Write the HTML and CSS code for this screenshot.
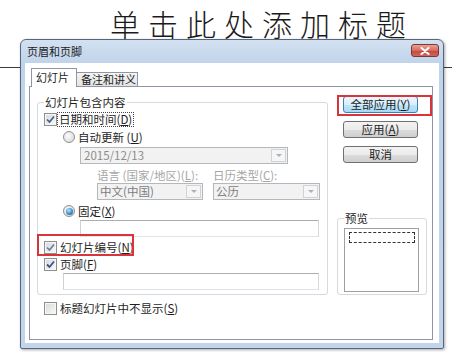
FILE: index.html
```html
<!DOCTYPE html>
<html lang="zh-CN">
<head>
<meta charset="utf-8">
<title>页眉和页脚</title>
<link rel="stylesheet" href="styles.css">
</head>
<body>
<div class="slide-rule"></div>
<h1 class="slide-title">单击此处添加标题</h1>

<div class="dialog">
  <div class="titlebar">
    <span class="title">页眉和页脚</span>
    <span class="close"><svg width="10" height="8" viewBox="0 0 10 8"><path d="M1.5 1 L8.5 7 M8.5 1 L1.5 7" stroke="#fff" stroke-width="2" stroke-linecap="round"/></svg></span>
  </div>
  <div class="client">
    <div class="tabs">
      <div class="tab active">幻灯片</div>
      <div class="tab">备注和讲义</div>
    </div>
    <div class="page">
      <div class="left-col">
        <fieldset class="group">
          <legend>幻灯片包含内容</legend>
          <div class="row first">
            <span class="cb"><svg width="9" height="9" viewBox="0 0 9 9"><path d="M1 4.5 L3.5 7 L8 1.5" fill="none" stroke="#41608f" stroke-width="1.7"/></svg></span>
            <span class="lbl focus">日期和时间(<span class="u">D</span>)</span>
          </div>
          <div class="row indent1 gap4">
            <span class="rb"></span>
            <span class="lbl">自动更新 (<span class="u">U</span>)</span>
          </div>
          <div class="combo date">
            <span class="val">2015/12/13</span><span class="drop"></span>
          </div>
          <div class="pair labels">
            <span>语言 (国家/地区)(<span class="u">L</span>):</span>
            <span>日历类型(<span class="u">C</span>):</span>
          </div>
          <div class="pair combos">
            <div class="combo"><span class="val">中文(中国)</span><span class="drop"></span></div>
            <div class="combo"><span class="val">公历</span><span class="drop"></span></div>
          </div>
          <div class="row indent1 gap4">
            <span class="rb on"><span class="dot"></span></span>
            <span class="lbl">固定(<span class="u">X</span>)</span>
          </div>
          <div class="field fixed"></div>
          <div class="row gap3">
            <span class="cb"><svg width="9" height="9" viewBox="0 0 9 9"><path d="M1 4.5 L3.5 7 L8 1.5" fill="none" stroke="#6a7f9f" stroke-width="1.7"/></svg></span>
            <span class="lbl">幻灯片编号(<span class="u">N</span>)</span>
          </div>
          <div class="row gap3">
            <span class="cb"><svg width="9" height="9" viewBox="0 0 9 9"><path d="M1 4.5 L3.5 7 L8 1.5" fill="none" stroke="#2f5592" stroke-width="1.8"/></svg></span>
            <span class="lbl">页脚(<span class="u">F</span>)</span>
          </div>
          <div class="field footer"></div>
        </fieldset>
        <div class="row hide-title">
          <span class="cb"></span>
          <span class="lbl">标题幻灯片中不显示(<span class="u">S</span>)</span>
        </div>
      </div>
      <div class="right-col">
        <div class="btns">
          <div class="btn default">全部应用(<span class="u">Y</span>)</div>
          <div class="btn">应用(<span class="u">A</span>)</div>
          <div class="btn">取消</div>
        </div>
        <fieldset class="group preview">
          <legend>预览</legend>
          <div class="preview-box"><div class="dash"></div></div>
        </fieldset>
      </div>
      <div class="mark mark-apply"></div>
      <div class="mark mark-number"></div>
    </div>
  </div>
</div>
</body>
</html>
```

FILE: styles.css
```css
* { box-sizing: border-box; }
html, body { margin: 0; padding: 0; }
body {
  width: 452px;
  height: 352px;
  overflow: hidden;
  background: #fff;
  position: relative;
  font-family: "Noto Sans CJK SC", "Noto Sans", sans-serif;
  color: #1e1e1e;
}

.slide-rule {
  position: absolute;
  left: 0; right: 0; top: 67px;
  height: 1px;
  background: #3a3a3a;
}
.slide-title {
  margin: 0;
  padding: 5px 0 0 110px;
  font-size: 30px;
  line-height: 36px;
  letter-spacing: 8px;
  font-weight: 300;
  color: #1a1a1a;
  white-space: nowrap;
}

.dialog {
  position: absolute;
  left: 20px; top: 39px;
  width: 424px; height: 310px;
  border: 1px solid #56677d;
  border-radius: 6px 6px 2px 2px;
  background: linear-gradient(#d3e1f1, #bfd3ea 24px, #c2d5eb);
  padding: 0 4px 5px 4px;
  display: flex;
  flex-direction: column;
  box-shadow: 1px 1px 3px rgba(0,0,0,.35);
}
.titlebar {
  height: 23px;
  display: flex;
  justify-content: space-between;
  align-items: flex-start;
  padding-left: 2px;
}
.title { font-size: 11px; line-height: 22px; color: #1b1b1b; }
.close {
  margin-top: 4px;
  width: 28px; height: 13px;
  border: 1px solid #7a3a33;
  border-radius: 3px;
  background: linear-gradient(#e9a296, #d56c5f 50%, #c4473a 51%, #d0685a);
  display: flex; align-items: center; justify-content: center;
}

.client {
  flex: 1;
  background: #fff;
  padding: 5px 6px 3px 4px;
  display: flex;
  flex-direction: column;
}
.tabs {
  height: 19px;
  display: flex;
  align-items: flex-start;
  margin-left: 2px;
  margin-bottom: -1px;
  position: relative;
  z-index: 1;
  font-size: 11px;
}
.tab {
  width: 61px; height: 14px;
  margin-top: 4px;
  border: 1px solid #8c97a3;
  border-left: none;
  border-bottom: none;
  background: linear-gradient(#f4f4f4, #e4e4e4);
  padding-left: 4px;
  line-height: 12px;
  white-space: nowrap;
}
.tab.active {
  width: 46px; height: 19px;
  margin-top: 0;
  border-left: 1px solid #8c97a3;
  background: #fff;
  padding-left: 4px;
  line-height: 17px;
}

.page {
  flex: 1;
  position: relative;
  border: 1px solid #8c97a3;
  background: #fff;
  display: grid;
  grid-template-columns: 291px 90px;
  column-gap: 9px;
  align-items: start;
  padding: 8px 0 0 7px;
  font-size: 11.5px;
}

.left-col { display: flex; flex-direction: column; }

.group {
  margin: 0;
  min-width: 0;
  padding: 0 6px 4px 6px;
  border: 1px solid #d3dae1;
  border-radius: 3px;
  display: flex;
  flex-direction: column;
}
.group legend {
  padding: 0 1px;
  margin: 0;
  line-height: 14px;
  font-size: 11.5px;
}

.row {
  display: flex;
  align-items: center;
  height: 14px;
  line-height: 14px;
  white-space: nowrap;
}
.row.first { margin-top: 3px; }
.gap4 { margin-top: 4px; }
.gap3 { margin-top: 3px; }
.indent1 { margin-left: 19px; }
.lbl { margin-left: 3px; }
.u { text-decoration: underline; text-underline-offset: 1px; }
.focus {
  margin-left: 1px;
  padding: 0 1px;
  outline: 1px dotted #444;
  line-height: 13px;
}

.cb {
  width: 13px; height: 13px;
  border: 1px solid #8e8f8f;
  box-shadow: inset 0 0 0 1px #f6f6f6;
  background: linear-gradient(135deg, #d8d8d8, #fafafa);
  display: flex; align-items: center; justify-content: center;
  flex: none;
}
.rb {
  width: 12px; height: 12px;
  border-radius: 50%;
  border: 1px solid #8e8f8f;
  background: radial-gradient(circle at 40% 40%, #fbfbfb, #d4d4d4);
  display: flex; align-items: center; justify-content: center;
  flex: none;
}
.rb .dot {
  width: 7px; height: 7px;
  border-radius: 50%;
  background: radial-gradient(circle at 40% 35%, #b6ecff, #3a8ccc 55%, #1c4f86);
}

.combo {
  display: flex;
  height: 17px;
  border: 1px solid #b3b8bd;
  background: #f2f2f2;
}
.combo .val {
  flex: 1;
  padding-left: 2px;
  line-height: 15px;
  color: #7d7d7d;
  white-space: nowrap;
}
.combo .drop {
  width: 15px;
  margin: 1px;
  border: 1px solid #cfd3d7;
  background: #f6f6f6;
  display: flex; align-items: center; justify-content: center;
}
.combo .drop::after {
  content: "";
  border-left: 3px solid transparent;
  border-right: 3px solid transparent;
  border-top: 3px solid #b0b0b0;
}
.combo.date { margin: 3px 0 0 36px; width: 208px; }
.combo.date .val { color: #8c8c8c; padding-left: 3px; }

.pair {
  margin-left: 53px;
  display: grid;
  grid-template-columns: 106px 107px;
  column-gap: 10px;
}
.pair.labels {
  margin-top: 4px;
  height: 14px;
  line-height: 14px;
  color: #a6a6a6;
  white-space: nowrap;
}
.pair.combos { margin-top: 1px; }

.field {
  height: 17px;
  border: 1px solid #b9bcc1;
  border-color: #abadb3 #d5d9de #dfe3e8 #cdd1d6;
  background: #fff;
}
.field.fixed { margin: 2px 0 0 36px; width: 239px; }
.field.footer { margin: 2px 0 0 19px; width: 256px; }

.hide-title { margin: 6px 0 0 7px; }

.right-col { display: flex; flex-direction: column; }
.btns {
  display: flex;
  flex-direction: column;
  gap: 8px;
  padding-left: 6px;
  margin-top: 1px;
}
.btn {
  width: 75px; height: 17px;
  border: 1px solid #707070;
  border-radius: 3px;
  background: linear-gradient(#f3f3f3, #ebebeb 50%, #dcdcdc 51%, #cfcfcf);
  text-align: center;
  line-height: 15px;
  white-space: nowrap;
}
.btn.default {
  border-color: #3c7fb1;
  background: linear-gradient(#eaf6fd, #d9f0fc 50%, #bee6fd 51%, #a9d9f3);
}

.preview { margin-top: 48px; width: 90px; padding: 0 6px 2px 6px; }
.preview-box {
  margin-top: 3px;
  width: 75px; height: 64px;
  border: 1px solid #a0a0a0;
  background: #fff;
  padding: 3px 0 0 4px;
}
.dash {
  width: 66px; height: 11px;
  border: 1px dashed #333;
}

.mark {
  position: absolute;
  border: 2px solid #d9343c;
}
.mark-apply { left: 307px; top: 8px; width: 95px; height: 21px; }
.mark-number { left: 7px; top: 147px; width: 97px; height: 22px; }
```
